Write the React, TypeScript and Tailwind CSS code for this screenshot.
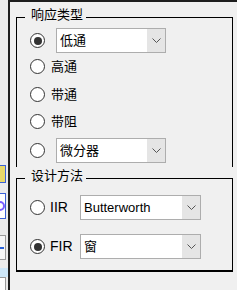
import { FC, ReactNode } from "react";

const Chevron: FC = () => (
    <svg width="9" height="5" viewBox="0 0 9 5" className="block">
        <polyline points="0.5,0.5 4.5,4.5 8.5,0.5" fill="none" stroke="#555" strokeWidth="1" />
    </svg>
);

const Combo: FC<{ value: string; width: string }> = ({ value, width }) => (
    <div className={`flex h-[25px] ${width} border border-[#adadad] bg-white`}>
        <div className="flex-1 flex items-center pl-[3px] text-[13px] leading-[17px] text-black">{value}</div>
        <div className="w-[18px] bg-[#e5e5e5] flex items-center justify-center">
            <Chevron />
        </div>
    </div>
);

const Radio: FC<{ checked?: boolean }> = ({ checked }) => (
    <div className="w-[15px] h-[15px] shrink-0 rounded-full border border-[#333] bg-white flex items-center justify-center">
        {checked && <div className="w-[8px] h-[8px] rounded-full bg-[#333]" />}
    </div>
);

const GroupHeader: FC<{ title: string }> = ({ title }) => (
    <div className="flex items-end h-[17px]">
        <div className="w-[9px] h-[6px] border-t border-l border-black" />
        <span className="px-[6px] pr-[3px] text-[13px] leading-[17px] self-start">{title}</span>
        <div className="flex-1 h-[6px] border-t border-r border-black" />
    </div>
);

const Group: FC<{ title: string; bottom?: boolean; className: string; children: ReactNode }> = (props) => (
    <div className="w-[217px]">
        <GroupHeader title={props.title} />
        <div className={`border-l border-r border-black pl-[13px] ${props.bottom ? 'border-b-2' : ''} ${props.className}`}>
            {props.children}
        </div>
    </div>
);

const LeftStrip: FC = () => (
    <div className="w-[8px] flex flex-col bg-[#ebebeb]">
        <div className="h-[165px]" />
        <div className="h-[18px] w-[6px] border-t border-r border-b border-[#3b62d6] bg-[#e9d86a]" />
        <div className="h-[10px]" />
        <div className="h-[26px] w-[6px] border-t border-r border-b border-[#3b62d6] bg-white flex items-center">
            <div className="w-[10px] h-[10px] -ml-[5px] rounded-full border-2 border-[#7a5cff]" />
        </div>
        <div className="h-[16px]" />
        <div className="h-[25px] w-[6px] border-t border-r border-b border-[#9a9a9a] bg-[#f7f7f7] flex items-center">
            <div className="w-[4px] h-[2px] bg-[#2a62d8]" />
        </div>
        <div className="h-[8px]" />
        <div className="h-[9px] bg-[#cde6f7]" />
        <div className="flex-1 w-[6px] border-t border-r border-[#9a9a9a] bg-white" />
    </div>
);

export default function App() {
    return (
        <div className="w-[237px] h-[290px] bg-[#f0f0f0] flex overflow-hidden font-['Liberation_Sans','Noto_Sans_CJK_SC',sans-serif] text-black">
            <LeftStrip />
            <div className="w-[2px] bg-[#1e1e1e]" />
            <div className="flex-1 flex flex-col">
                <div className="h-[2px] bg-[#1e1e1e]" />
                <div className="pl-[6px] pt-[4px]">
                    <Group title="响应类型" className="pt-[5px] pb-[4px]">
                        <div className="flex items-center h-[25px]">
                            <Radio checked />
                            <div className="ml-[11px]">
                                <Combo value="低通" width="w-[110px]" />
                            </div>
                        </div>
                        <div className="flex items-center gap-[6px] h-[15px] mt-[6px] text-[13px]">
                            <Radio />
                            <span>高通</span>
                        </div>
                        <div className="flex items-center gap-[6px] h-[15px] mt-[13px] text-[13px]">
                            <Radio />
                            <span>带通</span>
                        </div>
                        <div className="flex items-center gap-[6px] h-[15px] mt-[12px] text-[13px]">
                            <Radio />
                            <span>带阻</span>
                        </div>
                        <div className="flex items-center h-[25px] mt-[9px]">
                            <Radio />
                            <div className="ml-[11px]">
                                <Combo value="微分器" width="w-[110px]" />
                            </div>
                        </div>
                    </Group>
                    <Group title="设计方法" bottom className="pt-[11px] pb-[11px]">
                        <div className="flex items-center h-[25px]">
                            <Radio />
                            <span className="ml-[5px] w-[30px] text-[14px]">IIR</span>
                            <Combo value="Butterworth" width="w-[121px]" />
                        </div>
                        <div className="flex items-center h-[25px] mt-[14px]">
                            <Radio checked />
                            <span className="ml-[5px] w-[30px] text-[14px]">FIR</span>
                            <Combo value="窗" width="w-[121px]" />
                        </div>
                    </Group>
                </div>
            </div>
        </div>
    );
}
